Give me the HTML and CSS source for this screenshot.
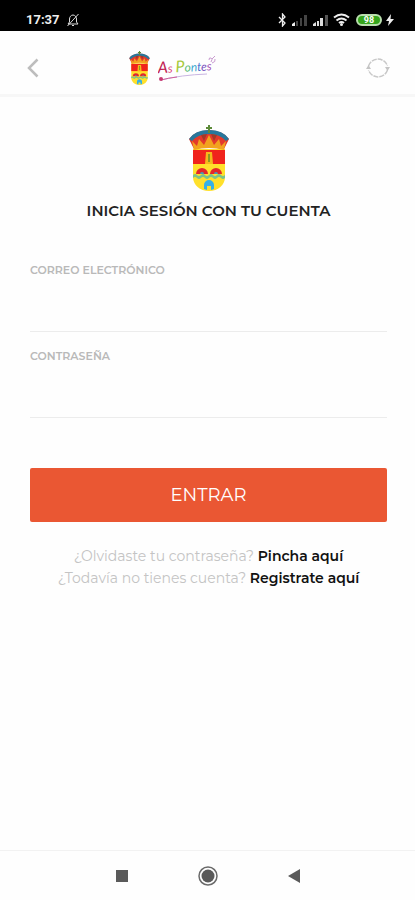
FILE: index.html
```html
<!DOCTYPE html>
<html lang="es">
<head>
  <meta charset="UTF-8" />
  <meta name="viewport" content="width=device-width, initial-scale=1.0"/>
  <title>As Pontes - Inicia sesión</title>
  <link rel="stylesheet" href="styles.css">
</head>
<body>
  <svg class="sprite" aria-hidden="true">
    <symbol id="crest" viewBox="0 0 40 66">
      <path d="M4 24h32v28c0 8-7 14-16 14S4 60 4 52z" fill="#ffe02b"/>
      <path d="M4 25h32v14H4z" fill="#f0231c"/>
      <path d="M17 27h6l1 12h-8z" fill="#f5b81c"/>
      <path d="M19 29h2v8h-2z" fill="#8c9b20"/>
      <path d="M7 49a6 6 0 0 1 12 0zM21 49a6 6 0 0 1 12 0z" fill="#e3262b"/>
      <path d="M11 49a2 2 0 0 1 4 0zM25 49a2 2 0 0 1 4 0z" fill="#4a9cb5"/>
      <path d="M4 50q2-2 4 0t4 0 4 0 4 0 4 0 4 0 4 0 4 0v3q-2 2-4 0t-4 0-4 0-4 0-4 0-4 0-4 0-4 0z" fill="#7cc48a"/>
      <path d="M15 64v-4a5 5 0 0 1 10 0v4l-3 1v-4h-4v4z" fill="#35b0e8"/>
      <path d="M5 24L0 14Q5 6 20 5q15 1 20 9l-5 10Q20 20 5 24z" fill="#e3392b"/>
      <path d="M0 14Q6 5 20 5q14 0 20 9l-3 2Q31 9 20 9T3 16z" fill="#28779b"/>
      <path d="M3 16l5 5 2-7 5 6 5-10 5 10 5-6 2 7 5-5-2 9Q20 21 5 25z" fill="#f2a31e"/>
      <path d="M12 10l3 6 3-7zM22 9l3 7 3-6z" fill="#a13a28"/>
      <path d="M19 0h2v2h2v2h-2v4h-2V4h-2V2h2z" fill="#5c8a38"/>
    </symbol>
  </svg>

  <div class="status-bar">
    <div class="status-left">
      <span>17:37</span>
      <svg width="14" height="14" viewBox="0 0 14 14" fill="none" stroke="#ddd">
        <path d="M2 11h10L10.500 9V6c0-2-1.500-4-3.500-4S3.500 4 3.500 6v3zM6 12.500h2M1.500 13L12.500 1" />
      </svg>
    </div>
    <div class="status-right">
      <svg width="9" height="14" viewBox="0 0 9 14" fill="none" stroke="#eee" stroke-width="1.300">
        <path d="M1 4l6 6-2.500 3V1L7 4l-6 6" />
      </svg>
      <svg width="17" height="13" viewBox="0 0 17 13">
        <path d="M1 13v-2l3-2v4z" fill="#eee"/>
        <path d="M5 13V8h2v5zM9 13V5h2v8zM13 13V2h3v11z" fill="#444"/>
      </svg>
      <svg width="17" height="13" viewBox="0 0 17 13">
        <path d="M1 13v-2l3-2v4zM5 13V8h2v5zM8 13V5h3v8z" fill="#ddd"/>
        <path d="M13 13V2h3v11z" fill="#555"/>
      </svg>
      <svg class="wifi" width="17" height="13" viewBox="0 0 17 13" fill="none" stroke="#eee" stroke-width="2">
        <path d="M1 4.500q7.500-6 15 0M3.500 7.500q5-4 10 0M6 10q2.500-2 5 0"/>
        <circle cx="8.500" cy="11.500" r="1.500" fill="#eee" stroke="none"/>
      </svg>
      <span class="battery">98</span>
      <svg width="8" height="12" viewBox="0 0 8 12" fill="#eee">
        <path d="M5 0L0 7h3l-1 5 6-7H4.500z"/>
      </svg>
    </div>
  </div>

  <header class="header">
    <button class="icon-btn" type="button" aria-label="Volver">
      <svg width="12" height="20" viewBox="0 0 12 20" fill="none" stroke="#bdbdbd" stroke-width="2.500">
        <path d="M10.500 1.500L2 10l8.500 8.500"/>
      </svg>
    </button>
    <div class="brand">
      <svg width="21" height="34"><use href="#crest"/></svg>
      <svg width="60" height="34" viewBox="0 0 60 34">
        <g class="brand-name" transform="rotate(-3 3 23)">
          <text x="0" y="22"><tspan class="cap" fill="#c02050">A</tspan><tspan fill="#e0457a">s</tspan> <tspan class="cap" fill="#a5c93a">P</tspan><tspan fill="#55bd72">o</tspan><tspan fill="#3fa9cf">n</tspan><tspan fill="#4c74cf">t</tspan><tspan fill="#7a55c0">e</tspan><tspan fill="#a04db5">s</tspan></text>
        </g>
        <path d="M3 29q20-5 46-6" fill="none" stroke="#c9b5e2"/>
        <path d="M3 29q7-2 16-3" fill="none" stroke="#d0609b"/>
        <circle cx="3" cy="28" r="2" fill="#c83a72"/>
        <path d="M51 9q0-3 2-2t0 4M54 8l3-3M54 12q4-1 3-4" fill="none" stroke="#c99bd0"/>
      </svg>
    </div>
    <button class="icon-btn" type="button" aria-label="Actualizar">
      <svg width="24" height="24" viewBox="0 0 24 24" fill="none" stroke="#c8c8c8" stroke-width="1.500">
        <path d="M2.500 10A10 10 0 0 1 21.500 10M21.500 14A10 10 0 0 1 2.500 14" stroke-dasharray="5 1"/>
        <path d="M0 13l2.500-4L5 13zM19 11l2.500 4L24 11z" fill="#c4c4c4" stroke="none"/>
      </svg>
    </button>
  </header>

  <main class="login">
    <svg class="crest" width="40" height="66"><use href="#crest"/></svg>
    <h1>INICIA SESIÓN CON TU CUENTA</h1>

    <form>
      <div class="field">
        <label for="email">CORREO ELECTRÓNICO</label>
        <input type="email" id="email" name="email" />
      </div>
      <div class="field">
        <label for="password">CONTRASEÑA</label>
        <input type="password" id="password" name="password" />
      </div>
      <button class="btn" type="submit">ENTRAR</button>
    </form>

    <div class="links">
      <p>¿Olvidaste tu contraseña? <a href="#">Pincha aquí</a></p>
      <p>¿Todavía no tienes cuenta? <a href="#">Registrate aquí</a></p>
    </div>
  </main>

  <nav class="nav-bar">
    <button class="icon-btn" type="button" aria-label="Recientes">
      <svg width="20" height="20" viewBox="0 0 20 20"><path d="M4 4h12v12H4z" fill="#5a5a5a"/></svg>
    </button>
    <button class="icon-btn" type="button" aria-label="Inicio">
      <svg width="20" height="20" viewBox="0 0 20 20">
        <circle cx="10" cy="10" r="9" fill="none" stroke="#6a6a6a" stroke-width="1.500"/>
        <circle cx="10" cy="10" r="6.500" fill="#5a5a5a"/>
      </svg>
    </button>
    <button class="icon-btn" type="button" aria-label="Atrás">
      <svg width="20" height="20" viewBox="0 0 20 20"><path d="M16 3v14L4 10z" fill="#5a5a5a"/></svg>
    </button>
  </nav>
</body>
</html>
```
FILE: styles.css
```css
* {
  box-sizing: border-box;
}

body {
  margin: 0;
  min-height: 100vh;
  display: flex;
  flex-direction: column;
  font-family: 'Montserrat', 'Inter', sans-serif;
  background: #fefefe;
  color: #222;
}

svg {
  display: block;
}

.sprite {
  position: absolute;
  width: 0;
  height: 0;
}

.status-bar {
  display: flex;
  justify-content: space-between;
  align-items: center;
  height: 31px;
  padding: 8px 21px 0 26px;
  background: #000;
  color: #eee;
  font-family: 'Roboto', sans-serif;
  font-size: 13px;
  font-weight: 700;
}

.status-left,
.status-right {
  display: flex;
  align-items: center;
}

.status-left {
  gap: 6px;
}

.status-right {
  gap: 4px;
}

.battery {
  width: 26px;
  height: 12px;
  margin-left: 2px;
  border: 2px solid #b9dfae;
  border-radius: 6px;
  background: #35a51c;
  color: #fff;
  font-size: 9px;
  line-height: 8px;
  text-align: center;
}

.icon-btn {
  padding: 0;
  border: none;
  background: none;
  cursor: pointer;
}

.header {
  display: flex;
  align-items: center;
  height: 66px;
  padding: 10px 25px 0 27px;
  border-bottom: 3px solid #f7f7f7;
}

.brand {
  display: flex;
  align-items: center;
  gap: 8px;
  margin: 0 auto 0 90px;
}

.brand-name {
  font-family: 'Lato', sans-serif;
  font-size: 12px;
  font-style: italic;
}

.brand-name .cap {
  font-size: 16px;
}

.login {
  flex: 1;
  padding: 28px 28px 0 30px;
}

.crest {
  margin: 0 auto;
}

.login h1 {
  margin: 10px 0 41px;
  font-size: 15px;
  font-weight: 600;
  line-height: 20px;
  text-align: center;
}

.field {
  margin-bottom: 16px;
}

.field label {
  display: block;
  font-size: 11px;
  font-weight: 600;
  line-height: 16px;
  color: #b9b9b9;
}

.field input {
  display: block;
  width: 100%;
  height: 54px;
  padding: 0;
  border: none;
  border-bottom: 1px solid #ececec;
  background: none;
  font-family: inherit;
  font-size: 16px;
  outline: none;
}

.field input:focus {
  border-bottom-color: #ea5733;
}

.btn {
  display: block;
  width: 100%;
  height: 54px;
  margin-top: 50px;
  border: none;
  border-radius: 2px;
  background: #ea5733;
  color: #fff;
  font-family: inherit;
  font-size: 18px;
  cursor: pointer;
}

.links {
  margin-top: 23px;
  font-size: 14px;
  line-height: 22px;
  text-align: center;
  color: #c4c4c4;
}

.links p {
  margin: 0;
}

.links a {
  color: #111;
  font-weight: 600;
  text-decoration: none;
}

.nav-bar {
  display: flex;
  justify-content: center;
  align-items: center;
  gap: 66px;
  height: 50px;
  border-top: 1px solid #f2f2f2;
}
```
